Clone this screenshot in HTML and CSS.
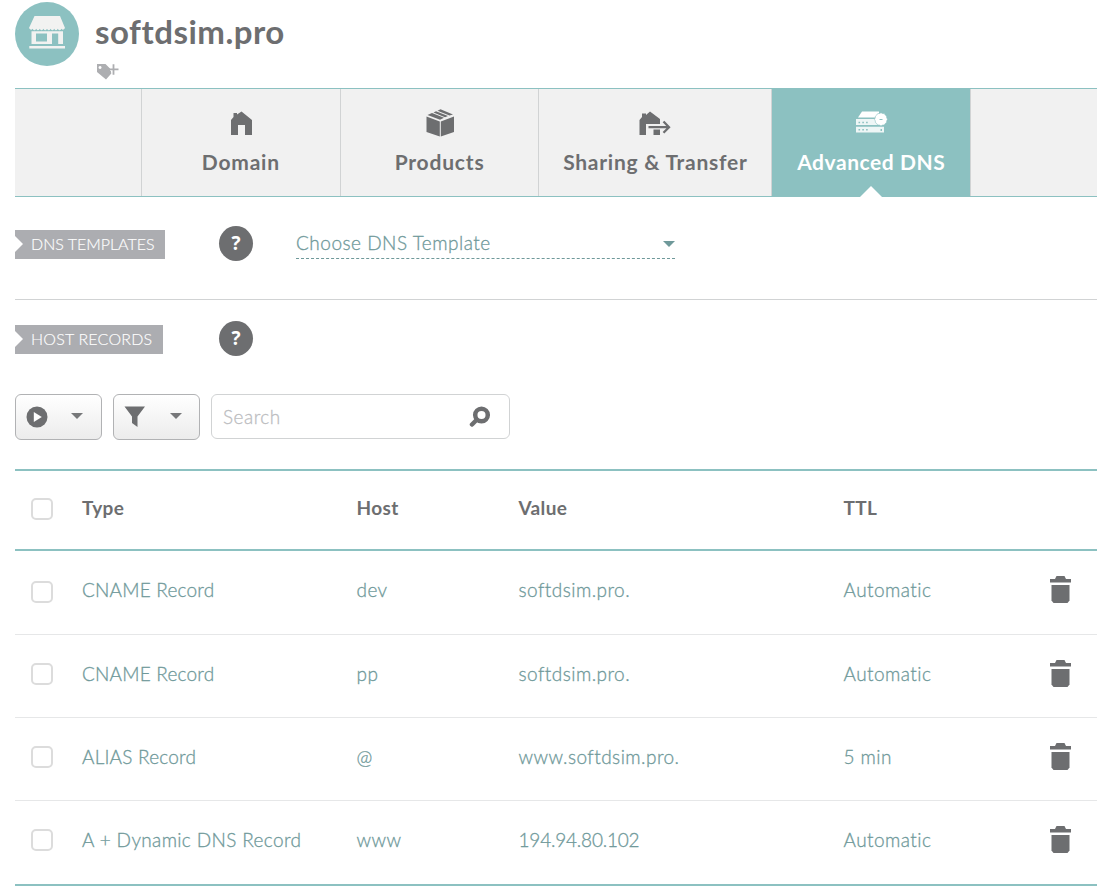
FILE: index.html
```html
<!DOCTYPE html>
<html lang="en">
<head>
<meta charset="utf-8">
<title>softdsim.pro</title>
<link rel="stylesheet" href="styles.css">
</head>
<body>
<svg class="defs" width="0" height="0">
  <symbol id="trash" viewBox="0 0 21 28"><path d="M0 3h5l1.500-3h8L16 3h5v3.500H0z"/><path d="M1.500 9h18v15.500l-2 2.500h-14l-2-2.500z"/></symbol>
</svg>
<main class="page">
  <header class="heading">
    <svg class="avatar" viewBox="0 0 64 64">
      <circle cx="32" cy="32" r="32" fill="#8cc1c1"/>
      <path fill="#f2f2f1" d="M19.500 14h25.500l5 12q-1.800 3-3.600 0.800-1.800 3-3.600 0-1.800 3-3.600 0-1.800 3-3.600 0-1.800 3-3.600 0-1.800 3-3.600 0-1.800 3-3.600 0-1.800 3-3.600 0-1.800 3-3.600 0-1.800 2-3.600-.8z"/>
      <path fill="#f2f2f1" fill-rule="evenodd" d="M16.500 29.200h31.500V42h-4.800V31.500H37V42H16.500zM21 31.500v8h11v-8z"/>
      <path fill="#f2f2f1" d="M14.300 44h35.700v2.500H14.300z"/>
    </svg>
    <div class="heading-text">
      <h1 class="title">softdsim.pro</h1>
      <svg class="tag" viewBox="0 0 22 16"><path fill="#adaeb1" fill-rule="evenodd" d="M0 0h8.500l5 5 .8 4.500L9 15.500 0 8zM3 2a1.500 1.500 0 1 0 .1 0z"/><path stroke="#fff" stroke-width="3" d="M13 5.300h9M16.500 0v11"/><path stroke="#adaeb1" stroke-width="1.800" d="M11.500 5.300h10M16.500 .3v10.500"/></svg>
    </div>
  </header>

  <nav class="tabs">
    <div class="tab-edge"></div>
    <a class="tab tab-regular">
      <svg class="tab-icon" viewBox="0 0 34 30"><path fill="#6d6e70" d="M7 27V12l2.500-3V5H13v1.500L17.500 3.500 28 12v15h-7V17h-7v10z"/></svg>
      <span class="tab-name name-domain">Domain</span>
    </a>
    <a class="tab tab-regular">
      <svg class="tab-icon" viewBox="0 0 34 30"><path fill="#6d6e70" d="M3.500 8.500 16.800 13.500v15L3.500 24zM17.800 13.500l13.200-5v15.500l-13.200 4.500zM4.500 7l4.500-2 12 4.700-4 2zM10.500 4.400l2.500-1.100L25 8l-3 1.200zM14.500 2.700 17.500 1.200 30 6.500l-3.500 1z"/></svg>
      <span class="tab-name name-products">Products</span>
    </a>
    <a class="tab tab-wide">
      <svg class="tab-icon" viewBox="0 0 34 30"><path fill="#6d6e70" d="M1.500 27V12l2.500-3V5.500h4v1.500l4-3.500L22 11v5H8v11zM15.500 21.500H22V27h-6.500z"/><path fill="none" stroke="#6d6e70" stroke-width="2.300" d="M10.500 19.200h20.500M25.500 13.500l5.500 5.700-5.500 5.600"/></svg>
      <span class="tab-name name-sharing">Sharing &amp; Transfer</span>
    </a>
    <a class="tab tab-regular tab-active">
      <svg class="tab-icon" viewBox="0 0 34 30"><path fill="#fff" d="M8 3.500h17v6H4z"/><path fill="#fff" fill-opacity=".85" d="M2 11h28v6H2zM2 18.800h28v5.700H2z"/><path stroke="#8cc1c1" stroke-width="1.500" stroke-dasharray="1.600 2.200" d="M4.500 14.500h11M4.500 21.800h11"/><path fill="#fff" stroke="#8cc1c1" stroke-width=".6" d="m25.500 5.500 1.500-.8 1.500.8 1.800.1 1 1.500 1.300 1.100.1 1.600.8 1.500-.8 1.600-.1 1.600-1.300 1-1 1.500-1.800.1-1.500.8-1.500-.8-1.800-.1-1-1.500-1.300-1-.1-1.600-.8-1.600.8-1.500.1-1.600 1.300-1.100 1-1.500z"/><path fill="#8cc1c1" d="M26.500 21h1.500v2h-1.500zM25.500 11h3v.9h-3z"/></svg>
      <span class="tab-name name-dns">Advanced DNS</span>
    </a>
    <div class="tab-edge tab-last"></div>
  </nav>

  <section class="section templates">
    <h2 class="label label-templates"><span>DNS TEMPLATES</span></h2>
    <span class="help">?</span>
    <div class="select"><span>Choose DNS Template</span><i class="caret caret-teal"></i></div>
  </section>
  <section class="section records">
    <h2 class="label label-records"><span>HOST RECORDS</span></h2>
    <span class="help">?</span>
  </section>

  <div class="toolbar">
    <button class="tool"><svg width="22" height="22" viewBox="0 0 22 22"><circle cx="11" cy="11" r="10.500" fill="#6d6e70"/><path fill="#fff" d="M7.800 6v10l8-5z"/></svg><i class="caret"></i></button>
    <button class="tool tool-filter"><svg width="22" height="22" viewBox="0 0 22 22"><path fill="#6d6e70" d="M.5.500h20.500l-7.500 10v10.500L8 17V10.500z"/></svg><i class="caret"></i></button>
    <div class="search"><span>Search</span><svg width="22" height="22" viewBox="0 0 22 22" fill="none" stroke="#6d6e70"><circle cx="12.500" cy="9" r="6.300" stroke-width="4.500"/><path stroke-width="4.500" stroke-linecap="round" d="m7.500 14-4.500 4.500"/></svg></div>
  </div>

  <div class="table">
    <div class="row row-head"><i class="check"></i><b>Type</b><b>Host</b><b>Value</b><b>TTL</b></div>
    <div class="row row-first"><i class="check"></i><span class="type">CNAME Record</span><span>dev</span><span>softdsim.pro.</span><span>Automatic</span><svg class="trash"><use href="#trash"/></svg></div>
    <div class="row"><i class="check"></i><span class="type">CNAME Record</span><span>pp</span><span>softdsim.pro.</span><span>Automatic</span><svg class="trash"><use href="#trash"/></svg></div>
    <div class="row"><i class="check"></i><span class="type">ALIAS Record</span><span>@</span><span>www.softdsim.pro.</span><span>5 min</span><svg class="trash"><use href="#trash"/></svg></div>
    <div class="row"><i class="check"></i><span class="type-dynamic">A + Dynamic DNS Record</span><span>www</span><span class="address">194.94.80.102</span><span>Automatic</span><svg class="trash"><use href="#trash"/></svg></div>
  </div>
</main>
</body>
</html>
```
FILE: styles.css
```css
* { box-sizing: border-box; }
body { margin: 0; background: #fff; color: #6d6e70; font-family: Lato, "Open Sans", sans-serif; font-weight: 300; overflow: hidden; }
.defs { display: block; height: 0; }
.page { width: 1097px; padding-left: 15px; }
.heading { display: flex; height: 88px; padding-top: 2px; gap: 16px; }
.avatar { width: 64px; height: 64px; flex: none; }
.heading-text { display: flex; flex-direction: column; align-items: flex-start; }
.title { margin: 7px 0 0; font-size: 33px; line-height: 44px; font-weight: 700; letter-spacing: .5px; }
.tag { width: 22px; height: 16px; margin: 11px 0 0 2px; }

.tabs { display: flex; height: 109px; background: #f1f1f1; border: solid #8cc1c1; border-width: 1px 0; }
.tab-edge { width: 126px; flex: none; }
.tab-last { flex: 1; border-left: 1px solid #d1d3d4; }
.tab { display: flex; flex-direction: column; align-items: center; flex: none; border-left: 1px solid #d1d3d4; padding-top: 19px; position: relative; }
.tab-regular { width: 198.700px; }
.tab-wide { width: 233px; }
.tab-icon { width: 34px; height: 30px; }
.tab-name { font-size: 21px; line-height: 30px; margin-top: 9px; font-weight: 700; white-space: nowrap; }
.name-domain { letter-spacing: .8px; }
.name-products { letter-spacing: .8px; }
.name-sharing { letter-spacing: .75px; }
.name-dns { letter-spacing: .55px; }
.tab-active { background: #8cc1c1; color: #fff; }
.tab-active::after { content: ""; position: absolute; bottom: -1px; left: 88px; border: solid transparent; border-width: 0 11px 11px; border-bottom-color: #fff; }

.section { display: flex; align-items: flex-start; }
.templates { height: 103px; padding-top: 33px; border-bottom: 1px solid #d1d3d4; }
.records { height: 94px; padding-top: 25px; }
.label { display: flex; align-items: center; height: 29px; margin: 0; padding: 0 0 2px 16px; background: #acadb1; color: #fff; font-size: 16px; font-weight: 300; white-space: nowrap; clip-path: polygon(0 0, 100% 0, 100% 100%, 0 100%, 0 22px, 8px 14px, 0 6px); -webkit-text-stroke: .15px; }
.label-templates { width: 150px; margin-right: 54px; }
.label-records { width: 148px; margin-right: 56px; letter-spacing: .2px; }
.help { width: 34px; height: 35px; margin-top: -4px; border-radius: 50%; background: #6d6e70; color: #fff; font: 700 19px/34px "Open Sans", sans-serif; text-align: center; }
.select { display: flex; justify-content: space-between; align-items: center; width: 379px; height: 31px; margin: -2px 0 0 43px; border-bottom: 1px dashed #6f999a; color: #6f999a; font-size: 19px; letter-spacing: .5px; -webkit-text-stroke: .3px; }
.select span { padding-bottom: 1px; }
.caret { border: solid transparent; border-width: 6px 6px 0; border-top-color: #77787a; }
.caret-teal { margin-top: 1px; border-top-color: #6f999a; }

.toolbar { display: flex; align-items: flex-start; height: 75px; }
.tool { display: flex; align-items: center; width: 87px; height: 46px; margin-right: 11px; padding: 0 10px; gap: 23px; border: 1px solid #b1b2b4; border-radius: 6px; background: linear-gradient(#fff, #ececec); }
.tool .caret { margin-top: -2px; }
.tool-filter { gap: 24px; }
.search { display: flex; align-items: center; justify-content: space-between; width: 299px; height: 45px; padding: 0 18px 0 11px; border: 1px solid #d1d3d4; border-radius: 6px; color: #bcbdbf; font-size: 19px; letter-spacing: .5px; }
.search span { padding-bottom: 1px; -webkit-text-stroke: .3px; }

.table { border: solid #8cc1c1; border-width: 2px 0; }
.row { display: grid; grid-template-columns: 67px 274.500px 162px 325px 206.500px 21px; align-items: center; height: 83px; padding-bottom: 5px; border-bottom: 1px solid #e6e7e8; color: #6f999a; font-size: 19px; letter-spacing: .45px; }
.row span { -webkit-text-stroke: .3px; }
.row b { font-weight: 700; letter-spacing: .35px; padding-bottom: 2px; }
.row .type { letter-spacing: .2px; }
.row .type-dynamic { letter-spacing: .36px; }
.row .address { letter-spacing: -.2px; }
.row-head { height: 80px; padding: 0 0 3px; border-bottom: 2px solid #8cc1c1; color: #6d6e70; }
.row:last-child { border-bottom: 0; padding-bottom: 6px; }
.row-first { height: 84px; padding-bottom: 6px; }
.check { width: 22px; height: 22px; margin: 1px 0 0 16px; border: 2px solid #dcdcdc; border-radius: 5px; }
.row-head .check { margin-top: 0; }
.row-first .check { margin-top: 4px; }
.trash { width: 21px; height: 28px; fill: #6d6e70; }
```
